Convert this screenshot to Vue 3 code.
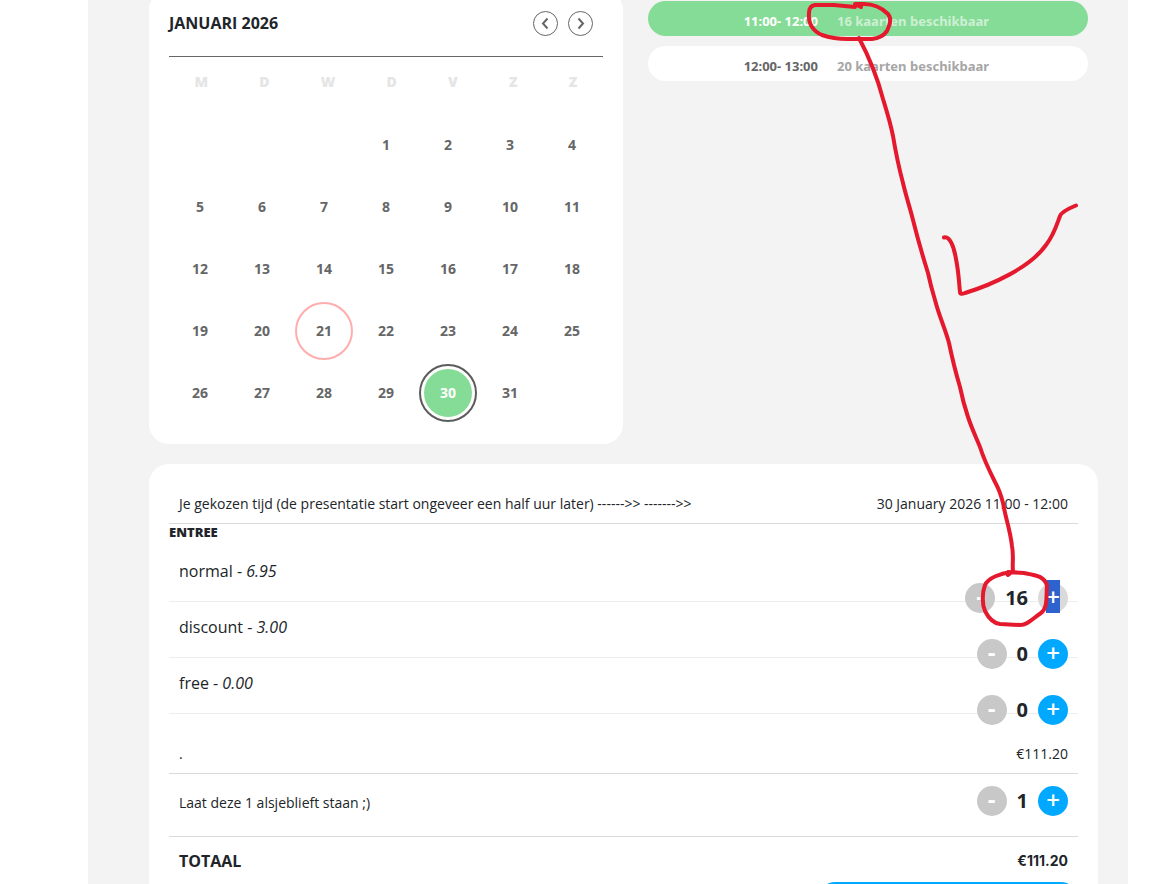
<script setup>
import { ref } from 'vue'

const weekdays = ['M', 'D', 'W', 'D', 'V', 'Z', 'Z']
const days = Array.from({ length: 31 }, (_, i) => i + 1)
const selected = ref(30)
const today = 21

const slots = [
  { time: '11:00- 12:00', left: '16 kaarten beschikbaar', active: true },
  { time: '12:00- 13:00', left: '20 kaarten beschikbaar', active: false },
]

const tickets = ref([
  { name: 'normal', price: '6.95', count: 16, full: true },
  { name: 'discount', price: '3.00', count: 0, full: false },
  { name: 'free', price: '0.00', count: 0, full: false },
])
</script>

<template>
  <div class="page">
    <main class="shell">
      <div class="top">
        <section class="calendar">
          <header class="cal-head">
            <h2>JANUARI 2026</h2>
            <div class="nav">
              <button type="button" aria-label="Vorige maand">
                <svg viewBox="0 0 23 23"><path d="M13.500 6.500 L9 11.500 L13.500 16.500" /></svg>
              </button>
              <button type="button" aria-label="Volgende maand">
                <svg viewBox="0 0 23 23"><path d="M9.500 6.500 L14 11.500 L9.500 16.500" /></svg>
              </button>
            </div>
          </header>
          <div class="weekdays">
            <span v-for="(d, i) in weekdays" :key="i">{{ d }}</span>
          </div>
          <div class="days">
            <button
              v-for="d in days"
              :key="d"
              type="button"
              :class="{ first: d === 1, today: d === today, selected: d === selected }"
            ><span>{{ d }}</span></button>
          </div>
        </section>

        <section class="slots">
          <button v-for="s in slots" :key="s.time" type="button" class="slot" :class="{ active: s.active }">
            <span class="time">{{ s.time }}</span>
            <span class="left">{{ s.left }}</span>
          </button>
        </section>
      </div>

      <section class="order">
        <div class="line chosen">
          <span>Je gekozen tijd (de presentatie start ongeveer een half uur later) ------&gt;&gt; -------&gt;&gt;</span>
          <span>30 January 2026 11:00 - 12:00</span>
        </div>
        <h3>ENTREE</h3>
        <div v-for="t in tickets" :key="t.name" class="ticket">
          <span class="label">{{ t.name }} - <em>{{ t.price }}</em></span>
          <div class="stepper">
            <button type="button" class="minus" aria-label="Minder">-</button>
            <output>{{ t.count }}</output>
            <button type="button" class="plus" :class="{ full: t.full }" aria-label="Meer"><span>+</span></button>
          </div>
        </div>
        <div class="line subtotal">
          <span>.</span>
          <span>€111.20</span>
        </div>
        <div class="line extra">
          <span>Laat deze 1 alsjeblieft staan ;)</span>
          <div class="stepper">
            <button type="button" class="minus" aria-label="Minder">-</button>
            <output>1</output>
            <button type="button" class="plus" aria-label="Meer"><span>+</span></button>
          </div>
        </div>
        <div class="total">
          <span>TOTAAL</span>
          <span class="amount">€111.20</span>
        </div>
        <button type="button" class="submit" aria-label="Bestellen"></button>
      </section>
    </main>

    <svg class="marks" width="1171" height="884" viewBox="0 0 1171 884" aria-hidden="true">
      <path d="M855 7 L834 5 L815 5 Q809 6 809 13 C808 24 813 31 822 35 Q833 39 848 39 L872 39 Q882 38 887 31 C890 24 892 19 888 14 C882 8 873 4 864 4 L855 4 L861 7" />
      <path d="M859 38 C868 55 877 76 883 99 C887 112 890 121 893 136 C896 154 899 168 903 183 C906 196 910 208 913 220 C918 240 923 257 928 273 Q931 287 935 300 C939 316 945 328 949 343 Q954 367 960 387 Q963 402 968 417 C972 429 976 437 980 447 C984 460 989 470 995 482 Q1000 491 1003 503 C1006 520 1010 529 1012 546 C1014 557 1012 564 1013 571" />
      <path d="M1008 575 L1012 572 C1001 573 988 578 985 585 C982 593 982 604 985 611 C988 617 992 623 1000 624 L1020 625 C1028 625 1032 619 1041 613 C1048 608 1046 596 1047 586 C1045 576 1035 575 1024 573 L1008 572" />
      <path d="M944 237.500 C950 236 954 247 956 259 C959 274 959 284 960 292 Q960 295 965 293 C991 285 1030 268 1046 245 C1054 235 1057 224 1060 216 C1062 211 1070 208 1076 205.500" />
    </svg>
  </div>
</template>

<style>
body {
  margin: 0;
  background: #fff;
}
</style>

<style scoped>
* {
  box-sizing: border-box;
}
.page {
  position: relative;
  height: 100vh;
  overflow: hidden;
  padding: 0 43px 0 88px;
  font-family: "Open Sans", "Noto Sans", sans-serif;
  font-size: 14px;
  line-height: 20px;
  color: #212529;
}
button {
  border: 0;
  padding: 0;
  background: none;
  font: inherit;
  color: inherit;
}
h2,
h3 {
  margin: 0;
}
.shell {
  min-height: 100%;
  padding: 0 30px 0 61px;
  background: #f3f3f3;
}
.top {
  display: flex;
  gap: 25px;
  align-items: flex-start;
}
.calendar {
  flex: none;
  margin-top: -10px;
  padding: 20px;
  border-radius: 20px;
  background: #fff;
}
.cal-head {
  display: flex;
  justify-content: space-between;
  height: 47px;
  padding-right: 10px;
  border-bottom: 1px solid #666;
}
.cal-head h2 {
  font-size: 16px;
  line-height: 26px;
}
.nav {
  display: flex;
  gap: 10px;
}
.nav button {
  width: 25px;
  height: 25px;
  border: 1px solid #666;
  border-radius: 50%;
  display: grid;
  margin-top: 1px;
}
.nav svg {
  width: 23px;
  height: 23px;
  fill: none;
  stroke: #666;
  stroke-width: 2;
}
.weekdays {
  display: flex;
  justify-content: space-around;
  padding: 15px 0 22px;
  font-weight: 800;
  color: #e5e5e5;
}
.days {
  display: grid;
  grid-template-columns: repeat(7, 62px);
  grid-auto-rows: 62px;
}
.days button {
  margin: 2px;
  border: 2px solid transparent;
  border-radius: 50%;
  padding: 3px;
  font-weight: 700;
  color: #666;
}
.days span {
  display: grid;
  place-items: center;
  height: 100%;
  border-radius: 50%;
}
.days .first {
  grid-column: 4;
}
.days .today {
  border-color: #ffadad;
}
.days .selected {
  border-color: #5c5c5c;
  color: #fff;
}
.days .selected span {
  background: #85dc96;
}
.slots {
  flex: 1;
  display: grid;
  gap: 10px;
  padding: 1px 10px 0 0;
}
.slot {
  display: grid;
  grid-template-columns: 170px 1fr;
  gap: 19px;
  align-items: center;
  height: 35px;
  padding-top: 4px;
  border-radius: 18px;
  background: #fff;
  font-family: "Noto Sans", sans-serif;
  font-size: 13px;
  font-weight: 700;
  color: #666;
}
.time {
  text-align: right;
}
.left {
  text-align: left;
  color: #a6a6a6;
}
.slot.active {
  background: #85dc96;
  color: #fff;
}
.slot.active .left {
  color: #ceefd4;
}
.order {
  margin-top: 20px;
  padding: 20px;
  border-radius: 20px;
  background: #fff;
}
.line {
  display: flex;
  justify-content: space-between;
  padding: 0 10px;
  border-bottom: 1px solid #d9dadb;
}
.chosen {
  padding-top: 10px;
  padding-bottom: 9px;
}
h3 {
  font-size: 13px;
  font-weight: 800;
  line-height: 16px;
  height: 22px;
}
.ticket {
  display: flex;
  justify-content: space-between;
  height: 56px;
  padding: 13px 10px 0;
  border-bottom: 1px solid #ededed;
}
.label {
  font-size: 16px;
  line-height: 24px;
}
.stepper {
  display: flex;
  gap: 10px;
  height: 30px;
  font-size: 20px;
  font-weight: 700;
  line-height: 30px;
}
.ticket .stepper {
  margin-top: 24px;
}
.stepper button {
  width: 30px;
  height: 30px;
  border-radius: 50%;
  font-size: 24px;
  line-height: 24px;
  padding-bottom: 4px;
  color: #fff;
}
.stepper .minus {
  background: #c8c8c8;
}
.stepper .plus {
  padding-bottom: 2px;
  background: #00a9ff;
  font-weight: 600;
}
.stepper .plus.full {
  background: #dadada;
}
.full span {
  background: #2d62cf;
}
.subtotal {
  padding-top: 30px;
  padding-bottom: 9px;
}
.extra {
  height: 63px;
  padding-top: 12px;
}
.extra > span {
  padding-top: 7px;
}
.total {
  display: flex;
  justify-content: space-between;
  padding: 14px 10px 11px;
  font-size: 16px;
  font-weight: 700;
}
.amount {
  font-family: Inter, sans-serif;
  font-size: 14px;
}
.submit {
  display: block;
  width: 260px;
  height: 35px;
  margin-left: auto;
  border-radius: 18px;
  background: #00a9ff;
}
.marks {
  position: absolute;
  left: 0;
  top: 0;
  pointer-events: none;
  fill: none;
  stroke: #e5192d;
  stroke-width: 4;
  stroke-linecap: round;
  stroke-linejoin: round;
}
</style>
